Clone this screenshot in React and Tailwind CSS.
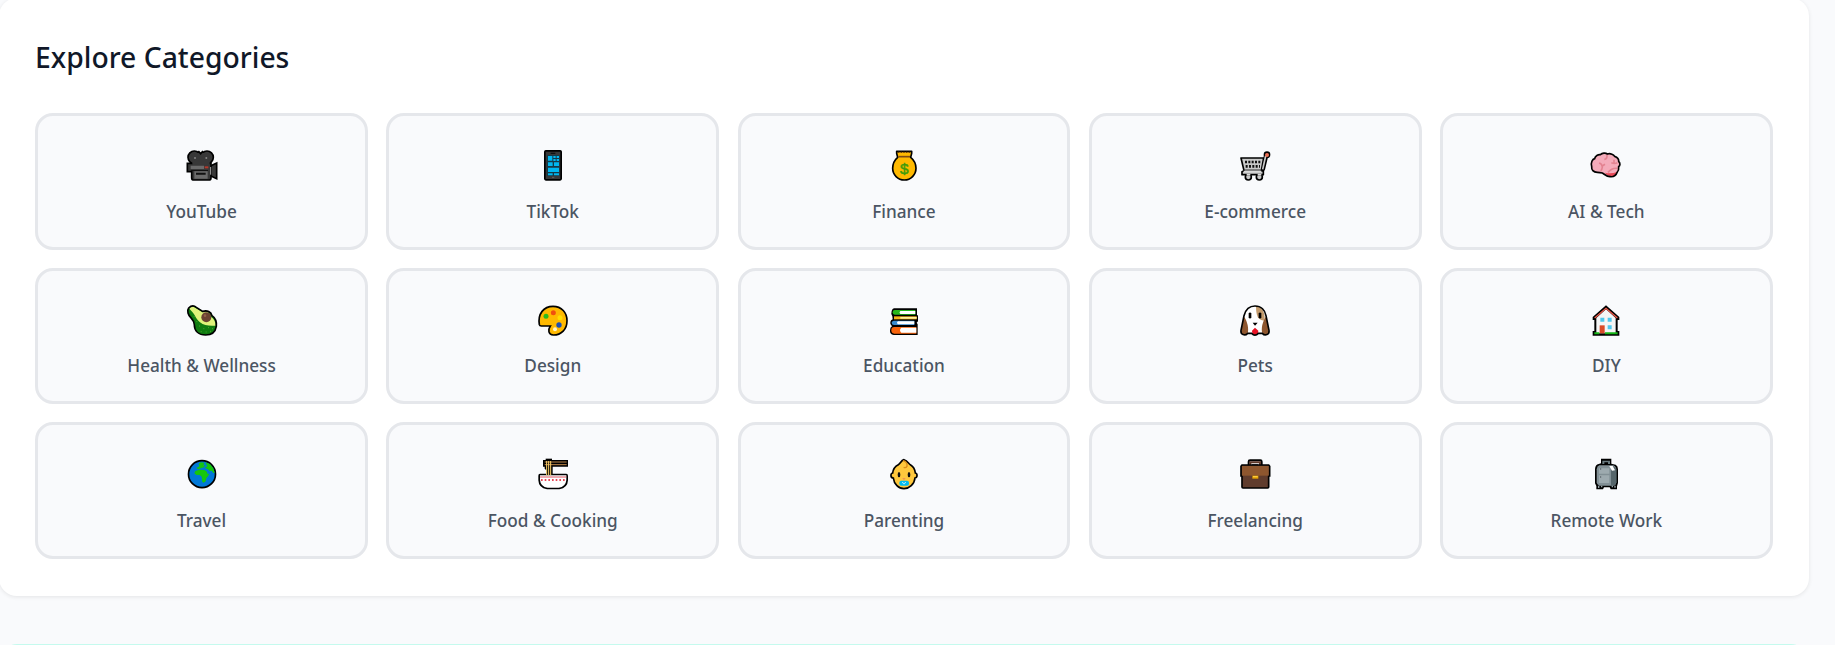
function CameraIcon() {
  return (
    <>
      <g fill="#383838" stroke="#000" strokeWidth="5">
        <path d="M79 57 L98 48 V95 L79 86 Z" />
        <path d="M10 49 H81 V92 Q81 99 74 99 H30 Q23 99 23 92 V74 H10 Z" />
        <circle cx="31" cy="31" r="19" />
        <circle cx="69" cy="31" r="19" />
      </g>
      <path d="M31 18 H69 V48 H31 Z" fill="#383838" />
      <path d="M42 9 H58 L50 19 Z" fill="#f9fafc" />
      <path d="M43 12 L50 20 L57 12" fill="none" stroke="#000" strokeWidth="5" />
      <path d="M25 42 H77 V55 H25 Z" fill="#383838" />
      <path d="M20 56 H60 V66 H20 Z M31 73 H71 V95 H31 Z" fill="#6b6b6b" />
      <path d="M36 77 H65 V83 H36 Z M21 69 H72 V72 H21 Z" fill="#111" />
      <path d="M80 60 V83" stroke="#aaa" strokeWidth="3" />
      <circle cx="33" cy="33" r="3" fill="#858585" />
      <circle cx="67" cy="33" r="3" fill="#858585" />
      <path d="M62 58 H73 V64 H62 Z" fill="#b5372a" />
    </>
  );
}

function PhoneIcon() {
  return (
    <>
      <rect x="29.500" y="11.500" width="49" height="87" rx="3" fill="#383838" stroke="#000" strokeWidth="5" />
      <rect x="36" y="24" width="38" height="63" fill="#153947" />
      <path
        d="M39 27h13v14h-13z M55 27h7v6h-7z M65 27h7v6h-7z M55 36h7v6h-7z M65 36h7v6h-7z M39 46h14v11h-14z M57 46h15v11h-15z M39 62h33v13h-33z M39 79h14v6h-14z M57 79h15v6h-15z"
        fill="#00b7f0"
      />
      <path d="M47 19 H61" stroke="#111" strokeWidth="4" />
      <path d="M51 91 H58" stroke="#777" strokeWidth="2" />
    </>
  );
}

function MoneyIcon() {
  return (
    <>
      <path
        d="M32 13 H77 V19 L74 31 Q90 44 90 64 A35 35 0 0 1 20 64 Q20 44 35 31 L32 19 Z"
        fill="#ffb900"
        stroke="#000"
        strokeWidth="5"
        strokeLinejoin="round"
      />
      <path d="M37 29 H72" stroke="#7d4b14" strokeWidth="5" />
      <path d="M36 16 H74" stroke="#6b3c10" strokeWidth="4" strokeDasharray="4 4" />
      <text x="55" y="81" textAnchor="middle" fontFamily="Liberation Sans" fontWeight="400" fontSize="46" fill="#3f9b0b" stroke="#3f9b0b" strokeWidth="1.500">
        $
      </text>
    </>
  );
}

function CartIcon() {
  return (
    <>
      <path d="M88 23 L78 65 L72 76" fill="none" stroke="#000" strokeWidth="13" />
      <circle cx="90" cy="23" r="10" fill="#000" />
      <g fill="#c9c9c9" stroke="#000" strokeWidth="5" strokeLinejoin="round">
        <circle cx="34" cy="90" r="9" />
        <circle cx="67" cy="90" r="9" />
        <path d="M12 33 H80 L73 72 H79 V83 H15 V74 L21 71 Z" />
      </g>
      <path d="M86 27 L77 67" stroke="#c9c9c9" strokeWidth="5" />
      <path d="M20 74 H73 M29 83 H40 M62 83 H73" stroke="#d9d9d9" strokeWidth="5" />
      <path d="M24 45 H72 M26 58 H69" stroke="#111" strokeWidth="8" strokeDasharray="6 4" />
      <path d="M20 69 H72" stroke="#333" strokeWidth="3" />
      <circle cx="90" cy="24" r="6" fill="#ec7055" />
    </>
  );
}

function BrainIcon() {
  return (
    <>
      <path
        d="M11 58 C8 46 13 37 20 35 C21 26 31 22 37 23 C43 17 53 17 58 21 C68 18 77 23 80 28 C89 30 93 38 92 43 C98 49 96 56 92 59 C93 68 91 72 88 75 C84 86 77 90 67 89 C57 90 50 82 43 78 C35 76 34 76 28 76 C16 76 10 68 11 58 Z"
        fill="#f4abba"
      />
      <path d="M51 77 Q68 82 89 74 Q82 93 66 88 Q57 87 51 77 Z" fill="#e74856" />
      <path
        d="M33 48 Q42 50 43 60 Q42 69 38 72 M44 56 L51 52 M49 37 Q58 36 57 24 M70 47 Q80 51 88 47 M78 48 V38 M60 76 Q72 62 88 64"
        fill="none"
        stroke="#e38391"
        strokeWidth="5"
      />
      <path
        d="M11 58 C8 46 13 37 20 35 C21 26 31 22 37 23 C43 17 53 17 58 21 C68 18 77 23 80 28 C89 30 93 38 92 43 C98 49 96 56 92 59 C93 68 91 72 88 75 C84 86 77 90 67 89 C57 90 50 82 43 78 C35 76 34 76 28 76 C16 76 10 68 11 58 Z"
        fill="none"
        stroke="#000"
        strokeWidth="5"
      />
    </>
  );
}

function AvocadoIcon() {
  return (
    <>
      <path
        d="M14 18 C22 10 31 11 37 16 L56 28 C70 24 81 29 84 41 C96 49 98 63 97 73 C94 91 81 99 65 99 C44 99 31 87 31 68 C31 51 15 47 12 33 C10 25 11 22 14 18 Z"
        fill="#107c10"
      />
      <path
        d="M16 18 C23 12 30 14 36 19 L56 31 C68 27 78 31 81 44 C90 50 95 59 95 71 C75 72 60 71 48 61 C36 51 34 40 25 30 Q17 22 16 18 Z"
        fill="#dff37a"
      />
      <circle cx="67" cy="46" r="15" fill="#6b4331" />
      <circle cx="63" cy="41" r="4" fill="#916047" />
      <path d="M45 72h3 M58 80h3 M72 77h3 M84 80h3 M50 89h3 M65 90h3 M78 88h3 M29 44h3 M37 59h3" stroke="#4aa52a" strokeWidth="3" />
      <path
        d="M14 18 C22 10 31 11 37 16 L56 28 C70 24 81 29 84 41 C96 49 98 63 97 73 C94 91 81 99 65 99 C44 99 31 87 31 68 C31 51 15 47 12 33 C10 25 11 22 14 18 Z"
        fill="none"
        stroke="#000"
        strokeWidth="5"
      />
    </>
  );
}

function PaletteIcon() {
  return (
    <>
      <path
        d="M13 68 C8 35 26 13 54 13 C80 13 96 32 96 56 C96 82 79 99 55 99 C40 98 38 84 46 72 H19 Q14 72 13 68 Z"
        fill="#ffb900"
        stroke="#000"
        strokeWidth="5"
      />
      <circle cx="33" cy="43" r="7.500" fill="#2dbb1b" />
      <circle cx="55" cy="32" r="7.500" fill="#f0500f" />
      <circle cx="75" cy="47" r="7.500" fill="#fff100" opacity=".65" />
      <circle cx="72" cy="69" r="8" fill="#1e4fb3" />
      <circle cx="60" cy="82" r="6" fill="#fff5c8" />
    </>
  );
}

function BooksIcon() {
  return (
    <>
      <path
        d="M24 19 H93 V40 H96 V58 L92 62 L95 67 V99 H23 Q11 98 12 85 Q12 76 18 73 Q11 67 13 60 Q14 54 20 52 L19 43 Q14 36 17 27 Q19 20 24 19 Z"
        fill="#000"
      />
      <path d="M26 24 H88 V38 H26 Q20 38 20 31 Q20 24 26 24 Z" fill="#26b81c" />
      <path d="M43 27 H88 V36 H43 Q38 31 43 27 Z" fill="#fff" />
      <path d="M24 43 H92 V52 H24 Z" fill="#f3b51b" />
      <path d="M43 45 H92 V50 H43 Z" fill="#fff2a0" />
      <path d="M24 56 H85 V69 H24 Q17 69 17 62 Q18 56 24 56 Z" fill="#398bd0" />
      <path d="M36 58 H85 V67 H36 Q30 62 36 58 Z" fill="#fff" />
      <path d="M25 75 H91 V95 H25 Q16 95 16 85 Q16 75 25 75 Z" fill="#f7630c" />
      <path d="M46 77 H91 V92 H46 Q38 85 46 77 Z" fill="#fff" />
    </>
  );
}

function DogIcon() {
  return (
    <>
      <path
        d="M54 12 C73 12 84 26 87 41 L96 85 C98 98 84 103 76 94 L64 94 Q54 105 44 94 L32 94 C24 103 10 98 12 85 L21 41 C25 26 35 12 54 12 Z"
        fill="#fff"
      />
      <path d="M57 13 C82 16 85 43 82 56 Q72 56 63 47 Q57 35 57 13 Z" fill="#c29a6c" />
      <path d="M20 43 C27 51 36 72 33 91 C27 101 13 100 13 86 Z M88 43 C81 51 72 72 75 91 C81 101 95 100 95 86 Z" fill="#8e562e" />
      <path d="M45 86 L54 77 L64 86 Q64 98 54 99 Q45 97 45 86 Z" fill="#e81123" />
      <path d="M36 33h6v15h-6z M66 33h6v15h-6z" fill="#000" stroke="#000" strokeWidth="2" strokeLinejoin="round" />
      <path d="M47 62 H62 L54 71 Z" fill="#000" />
      <path
        d="M54 12 C73 12 84 26 87 41 L96 85 C98 98 84 103 76 94 L64 94 Q54 105 44 94 L32 94 C24 103 10 98 12 85 L21 41 C25 26 35 12 54 12 Z"
        fill="none"
        stroke="#000"
        strokeWidth="5"
      />
    </>
  );
}

function HouseIcon() {
  return (
    <>
      <path d="M54 10 L94 45 V54 H89 V87 H94 V101 H14 V87 H19 V54 H14 V45 Z" fill="#000" />
      <path d="M54 22 L83 48 V94 H25 V48 Z" fill="#f5f5f5" />
      <path d="M20 48 L54 19 L88 48" fill="none" stroke="#f05a4a" strokeWidth="4" />
      <path d="M37 47h12v12h-12z M59 47h12v12h-12z M59 70h12v12h-12z" fill="#50c8ed" />
      <path d="M35 70h15v24h-15z" fill="#da4b28" />
      <path d="M19 91 H34 V97 H19 Z M51 91 H89 V97 H51 Z" fill="#16b516" />
    </>
  );
}

function GlobeIcon() {
  return (
    <>
      <circle cx="54" cy="54.500" r="40.500" fill="#0078d7" stroke="#000" strokeWidth="5" />
      <path d="M50 19 L61 20 L58 29 L65 26 L60 34 L43 40 L37 36 L46 31 L44 24 Z M64 19 L78 24 L88 37 L92 50 L88 51 L83 44 L77 45 L72 40 L62 36 L70 31 Z" fill="#16c60c" />
      <path d="M34 45 L46 41 L60 42 L67 45 L71 54 L76 53 L72 61 L67 66 L65 76 L59 80 L55 78 L53 62 L47 57 H37 L31 52 Z" fill="#16c60c" />
      <path d="M50 37 H66" stroke="#0078d7" strokeWidth="2" />
    </>
  );
}

function NoodlesIcon() {
  return (
    <>
      <path d="M24 12 H99 V32 H53 V53 H94 Q99 53 99 59 V73 Q98 96 73 100 H36 Q11 96 10 73 V59 Q10 53 15 53 H34 V43 L29 38 V32 H24 Z" fill="#000" />
      <path d="M15 58 H94 V72 Q92 93 71 95 H38 Q17 93 15 72 Z" fill="#fff" />
      <path d="M15 63 H94" stroke="#dd5560" strokeWidth="3" />
      <path d="M18 72 H93" stroke="#e74856" strokeWidth="6" strokeDasharray="5 6" />
      <path d="M29 18 H95 M29 26 H95" stroke="#bd8549" strokeWidth="3" />
      <path d="M35 15 V58 M41 15 V58 M47 15 V58" stroke="#ffd36b" strokeWidth="3" />
      <path d="M32 10 H51" stroke="#000" strokeWidth="4" />
    </>
  );
}

function BabyIcon() {
  return (
    <>
      <path
        d="M54 11 C66 15 67 23 74 27 C86 34 87 44 88 51 Q94 52 93 60 Q92 66 87 66 C85 85 70 98 54 98 C38 98 24 85 22 66 Q16 66 15 60 Q14 52 20 51 C21 42 25 32 37 26 C45 22 44 14 54 11 Z"
        fill="#ffc83d"
        stroke="#000"
        strokeWidth="5"
      />
      <path d="M51 14 Q65 17 63 31 Q59 37 53 34" fill="none" stroke="#d98b18" strokeWidth="4" />
      <ellipse cx="39" cy="56" rx="4" ry="8" fill="#111" />
      <ellipse cx="69" cy="56" rx="4" ry="8" fill="#111" />
      <path d="M49 66 H59 L54 73 Z" fill="#ee9455" />
      <rect x="40" y="74" width="29" height="15" rx="6" fill="#00bcf2" />
      <path d="M50 78 V81 Q54 87 58 81 V78" fill="none" stroke="#b9efff" strokeWidth="3" />
    </>
  );
}

function BriefcaseIcon() {
  return (
    <>
      <path d="M35 27 V17 Q35 13 39 13 H70 Q74 13 74 17 V27" fill="none" stroke="#000" strokeWidth="6" />
      <path d="M40 27 V19 H69 V27" fill="none" stroke="#60392a" strokeWidth="6" />
      <path d="M45 25 H64 V30 H45 Z" fill="#000" />
      <path d="M15 27 H95 L98 31 V60 H95 V93 Q95 96 92 96 H18 Q15 96 15 93 V60 H12 V31 Z" fill="#603c2d" stroke="#000" strokeWidth="5" />
      <path d="M15 30 H95 V59 H15 Z" fill="#8e562e" />
      <path d="M46 59 H64 V68 H46 Z" fill="#e5a000" />
      <path d="M48 62 H62" stroke="#ffd34d" strokeWidth="3" />
    </>
  );
}

function LuggageIcon() {
  return (
    <>
      <path d="M39 8 H70 V23 L83 26 Q90 30 90 40 V81 L87 91 V100 H68 L65 94 H48 L45 100 H25 V90 L21 82 V39 Q22 26 32 24 L39 22 Z" fill="#000" />
      <path d="M43 14 H66 V24 H60 V19 H49 V24 H43 Z" fill="#69797e" />
      <path d="M34 28 H76 Q85 31 85 42 V80 Q83 88 76 89 H34 Q27 87 26 79 V40 Q27 30 34 28 Z" fill="#829096" />
      <path d="M69 30 Q85 31 85 42 V80 Q83 88 76 89 H69 Z" fill="#56666b" />
      <path d="M33 37 H64 V53 H33 Z M33 58 H64 V81 H33 Z" fill="#9daaaf" />
      <path d="M64 30 H74 L81 43 L72 44 Z" fill="#fff" />
      <path d="M38 37v4 M38 61v4" stroke="#475158" strokeWidth="3" />
      <path d="M32 89v7 M41 89v5 M73 89v5 M81 89v6" stroke="#99a6ab" strokeWidth="4" />
    </>
  );
}

const CATEGORIES = [
  { name: "YouTube", icon: CameraIcon },
  { name: "TikTok", icon: PhoneIcon },
  { name: "Finance", icon: MoneyIcon },
  { name: "E-commerce", icon: CartIcon },
  { name: "AI & Tech", icon: BrainIcon },
  { name: "Health & Wellness", icon: AvocadoIcon },
  { name: "Design", icon: PaletteIcon },
  { name: "Education", icon: BooksIcon },
  { name: "Pets", icon: DogIcon },
  { name: "DIY", icon: HouseIcon },
  { name: "Travel", icon: GlobeIcon },
  { name: "Food & Cooking", icon: NoodlesIcon },
  { name: "Parenting", icon: BabyIcon },
  { name: "Freelancing", icon: BriefcaseIcon },
  { name: "Remote Work", icon: LuggageIcon },
];

function CategoryCard({ name, icon: Icon }) {
  return (
    <button className="flex h-[136.2px] flex-col items-center rounded-[18px] border-3 border-[#e5e7eb] bg-[#f9fafc] pt-[30.8px]">
      <svg viewBox="0 0 108 108" className="size-9 shrink-0" aria-hidden="true">
        <Icon />
      </svg>
      <span className="mt-[14.8px] text-[17.2px] leading-7 font-medium text-[#4b5563]">{name}</span>
    </button>
  );
}

export default function App() {
  return (
    <div className="h-[645px] w-full overflow-hidden bg-[#f9fafc] font-['Noto_Sans','Open_Sans',sans-serif]">
      <section className="-mt-0.5 -ml-[1.5px] h-[597.5px] w-[1810.5px] rounded-[18px] bg-white pt-[41px] pr-[36.2px] pl-[36.6px] shadow-[0_1px_4px_rgba(0,0,0,0.09)]">
        <h2 className="text-[28.3px] leading-9 font-medium text-gray-900">Explore Categories</h2>
        <div className="mt-[38.4px] grid grid-cols-5 gap-[18.3px]">
          {CATEGORIES.map((c) => (
            <CategoryCard key={c.name} name={c.name} icon={c.icon} />
          ))}
        </div>
      </section>
      <section className="mt-[48px] -ml-[1.5px] h-20 w-[1810.5px] rounded-[18px] border border-[#c5faee] bg-[#f0fdfa]" />
    </div>
  );
}
